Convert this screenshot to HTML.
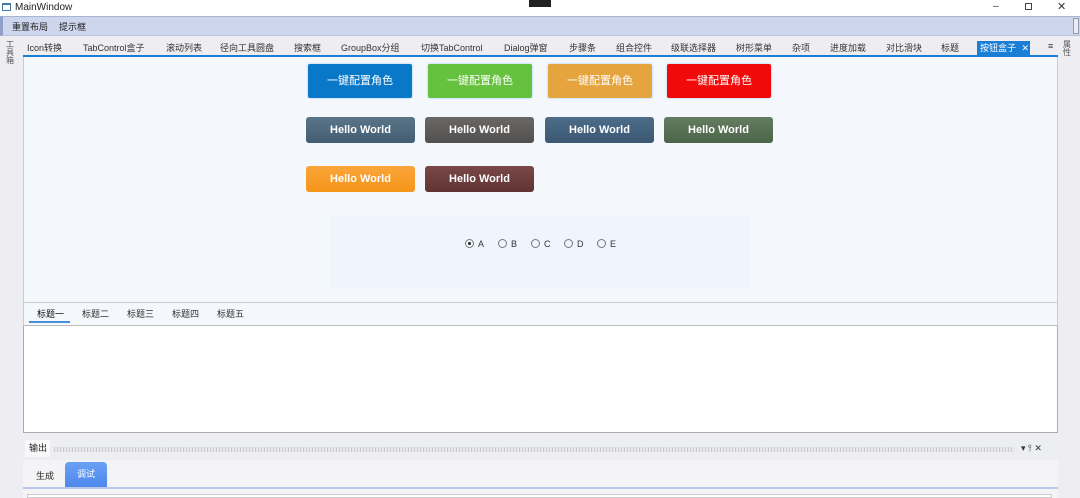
<!DOCTYPE html><html><head><meta charset="utf-8"><style>
*{margin:0;padding:0;box-sizing:border-box}
body{width:1080px;height:498px;overflow:hidden;background:#eeeef2;font-family:"Liberation Sans","Noto Sans CJK SC",sans-serif;font-size:9px;color:#222;position:relative}
.a{position:absolute}
.t{position:absolute;top:41px;font-size:9px;color:#333;white-space:nowrap}
.b1{position:absolute;top:64px;width:104px;height:34px;color:#fff;font-size:11px;text-align:center;line-height:34px;border-radius:2px;box-shadow:0 0 2px #9cf}
.b2{position:absolute;width:109px;height:26px;color:#fff;font-weight:bold;font-size:11px;text-align:center;line-height:26px;border-radius:3px}
.r{position:absolute;top:239px;font-size:9px;color:#333;white-space:nowrap}
.r i{display:inline-block;width:9px;height:9px;border:1px solid #777;border-radius:50%;vertical-align:-1px;margin-right:4px;position:relative}
.h{position:absolute;top:307px;font-size:9px;color:#333}
</style></head><body>
<div class="a" style="left:0;top:0;width:1080px;height:16px;background:#fff"></div>
<div class="a" style="left:2px;top:3px;width:9px;height:8px;border:1px solid #47a;border-top-width:2px"></div>
<div class="a" style="left:15px;top:2px;font-size:10px;color:#222">MainWindow</div>
<div class="a" style="left:529px;top:0;width:22px;height:7px;background:#222"></div>
<div class="a" style="left:993px;top:1px;font-size:10px;color:#333">–</div>
<div class="a" style="left:1025px;top:3px;width:7px;height:7px;border:1px solid #444"></div>
<div class="a" style="left:1057px;top:0;font-size:11px;color:#333">✕</div>
<div class="a" style="left:0;top:16px;width:1080px;height:20px;background:#cdd6ed;border-top:1px solid #a8b4d4;border-bottom:1px solid #b8c2dc;border-left:3px solid #8fa0c8"></div>
<div class="a" style="left:12px;top:20px;font-size:9px">重置布局</div>
<div class="a" style="left:59px;top:20px;font-size:9px">提示框</div>
<div class="a" style="left:1073px;top:18px;width:6px;height:16px;background:#e8ecf5;border:1px solid #99a"></div>
<div class="a" style="left:6px;top:41px;width:10px;font-size:8px;line-height:8px;color:#555">工具箱</div>
<div class="a" style="left:1063px;top:41px;width:10px;font-size:8px;line-height:8px;color:#555">属性</div>
<span class="t" style="left:27px">Icon转换</span><span class="t" style="left:83px">TabControl盒子</span><span class="t" style="left:166px">滚动列表</span><span class="t" style="left:220px">径向工具圆盘</span><span class="t" style="left:294px">搜索框</span><span class="t" style="left:341px">GroupBox分组</span><span class="t" style="left:421px">切换TabControl</span><span class="t" style="left:504px">Dialog弹窗</span><span class="t" style="left:569px">步骤条</span><span class="t" style="left:616px">组合控件</span><span class="t" style="left:671px">级联选择器</span><span class="t" style="left:736px">树形菜单</span><span class="t" style="left:792px">杂项</span><span class="t" style="left:830px">进度加载</span><span class="t" style="left:886px">对比滑块</span><span class="t" style="left:941px">标题</span>
<div class="a" style="left:977px;top:41px;width:53px;height:15px;background:#1a7fd4;color:#fff;font-size:9px;line-height:15px;padding-left:3px">按钮盒子 <span style="margin-left:3px">✕</span></div>
<span class="t" style="left:1048px">≡</span>
<div class="a" style="left:23px;top:55px;width:1035px;height:2px;background:#1a7fd4"></div>
<div class="a" style="left:23px;top:57px;width:1035px;height:245px;background:#f4f7fb;border-left:1px solid #ccc;border-right:1px solid #ccc"></div>
<div class="b1" style="left:308px;background:#0a78c8">一键配置角色</div>
<div class="b1" style="left:428px;background:#66c23e">一键配置角色</div>
<div class="b1" style="left:548px;background:#e6a43e">一键配置角色</div>
<div class="b1" style="left:667px;background:#f20a0a">一键配置角色</div>
<div class="b2" style="left:306px;top:117px;background:linear-gradient(#5a7488,#435d72)">Hello World</div>
<div class="b2" style="left:425px;top:117px;background:linear-gradient(#6a6866,#52504e)">Hello World</div>
<div class="b2" style="left:545px;top:117px;background:linear-gradient(#4d6c88,#3a5874)">Hello World</div>
<div class="b2" style="left:664px;top:117px;background:linear-gradient(#647c60,#4c6448)">Hello World</div>
<div class="b2" style="left:306px;top:166px;background:linear-gradient(#fba53a,#f5951a)">Hello World</div>
<div class="b2" style="left:425px;top:166px;background:linear-gradient(#7a4848,#603434)">Hello World</div>
<div class="a" style="left:330px;top:216px;width:420px;height:72px;background:#eef5fd"></div>
<span class="r" style="left:465px"><i><b style="position:absolute;left:2px;top:2px;width:3px;height:3px;background:#222;border-radius:50%"></b></i>A</span>
<span class="r" style="left:498px"><i></i>B</span>
<span class="r" style="left:531px"><i></i>C</span>
<span class="r" style="left:564px"><i></i>D</span>
<span class="r" style="left:597px"><i></i>E</span>
<div class="a" style="left:23px;top:302px;width:1035px;height:24px;background:#f4f7fb;border:1px solid #ccc;border-bottom:1px solid #bbb"></div>
<span class="h" style="left:37px;color:#111">标题一</span><span class="h" style="left:82px">标题二</span><span class="h" style="left:127px">标题三</span><span class="h" style="left:172px">标题四</span><span class="h" style="left:217px">标题五</span>
<div class="a" style="left:29px;top:321px;width:41px;height:2px;background:#4a8fdc"></div>
<div class="a" style="left:23px;top:326px;width:1035px;height:107px;background:#fff;border:1px solid #aaa;border-top:none"></div>
<div class="a" style="left:23px;top:438px;width:1035px;height:22px;background:#eceef2"></div>
<div class="a" style="left:25px;top:440px;width:25px;height:17px;background:#f8f8f8;font-size:9px;line-height:17px;padding-left:4px">输出</div>
<div class="a" style="left:54px;top:447px;width:960px;height:5px;background:repeating-linear-gradient(90deg,#ccc 0 1px,#e8e8ec 1px 3px)"></div>
<div class="a" style="left:1021px;top:443px;font-size:9px;color:#333">▾ ⫯ ✕</div>
<div class="a" style="left:23px;top:460px;width:1035px;height:38px;background:#f4f4f6"></div>
<div class="a" style="left:36px;top:469px;font-size:9px">生成</div>
<div class="a" style="left:65px;top:462px;width:42px;height:25px;background:linear-gradient(#6aa0f5,#4d88ec);border-radius:4px 4px 0 0;color:#fff;font-size:9px;text-align:center;line-height:25px">调试</div>
<div class="a" style="left:23px;top:487px;width:1035px;height:2px;background:#b8c8ec"></div>
<div class="a" style="left:27px;top:494px;width:1025px;height:4px;background:#fff;border:1px solid #ccc"></div>
</body></html>
